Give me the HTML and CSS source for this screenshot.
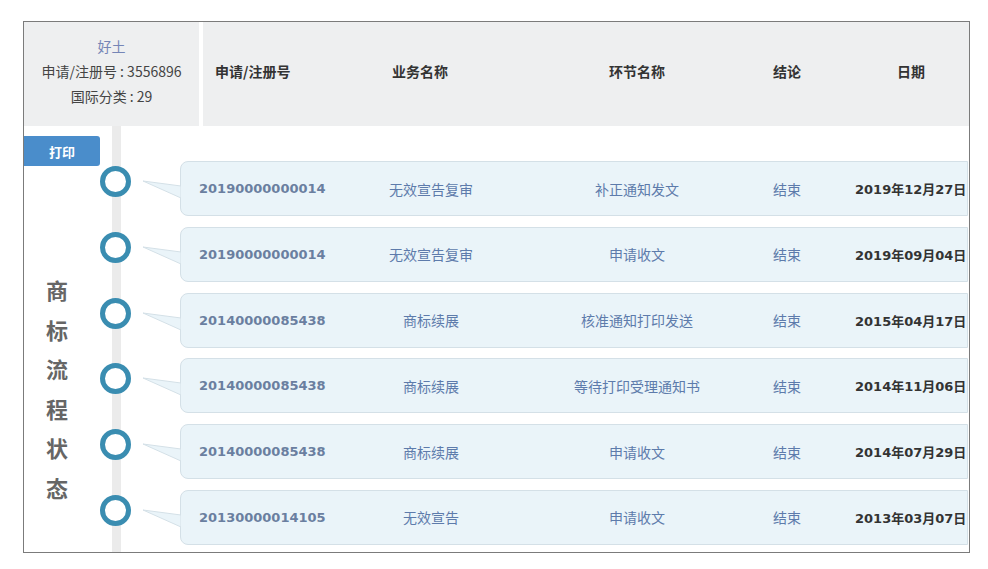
FILE: index.html
```html
<!DOCTYPE html>
<html lang="zh-CN">

<head>
    <meta charset="UTF-8" />
    <meta name="viewport" content="width=device-width, initial-scale=1.0" />
    <title>商标流程状态</title>
    <link rel="stylesheet" href="styles.css">
</head>

<body>

    <div class="frame">
        <header class="head">
            <div class="info">
                <div class="name">好土</div>
                <div>申请/注册号 : 3556896</div>
                <div>国际分类 : 29</div>
            </div>
            <div class="cols">
                <div class="col-num">申请/注册号</div>
                <div>业务名称</div>
                <div>环节名称</div>
                <div>结论</div>
                <div>日期</div>
            </div>
        </header>

        <main class="body">
            <aside class="side">
                <button class="print">打印</button>
                <div class="title">商标流程状态</div>
            </aside>

            <div class="timeline">
                <div class="row">
                    <span class="dot"></span>
                    <svg class="tail" width="38" height="55" viewBox="0 0 38 55">
                        <polygon points="38,25 0,20 38,37" fill="#eaf4f9" stroke="#d4e0e7" />
                    </svg>
                    <div class="card">
                        <div class="num">20190000000014</div>
                        <div class="biz">无效宣告复审</div>
                        <div class="step">补正通知发文</div>
                        <div class="res">结束</div>
                        <div class="date">2019年12月27日</div>
                    </div>
                </div>
                <div class="row">
                    <span class="dot"></span>
                    <svg class="tail" width="38" height="55" viewBox="0 0 38 55">
                        <polygon points="38,25 0,20 38,37" fill="#eaf4f9" stroke="#d4e0e7" />
                    </svg>
                    <div class="card">
                        <div class="num">20190000000014</div>
                        <div class="biz">无效宣告复审</div>
                        <div class="step">申请收文</div>
                        <div class="res">结束</div>
                        <div class="date">2019年09月04日</div>
                    </div>
                </div>
                <div class="row">
                    <span class="dot"></span>
                    <svg class="tail" width="38" height="55" viewBox="0 0 38 55">
                        <polygon points="38,25 0,20 38,37" fill="#eaf4f9" stroke="#d4e0e7" />
                    </svg>
                    <div class="card">
                        <div class="num">20140000085438</div>
                        <div class="biz">商标续展</div>
                        <div class="step">核准通知打印发送</div>
                        <div class="res">结束</div>
                        <div class="date">2015年04月17日</div>
                    </div>
                </div>
                <div class="row">
                    <span class="dot"></span>
                    <svg class="tail" width="38" height="55" viewBox="0 0 38 55">
                        <polygon points="38,25 0,20 38,37" fill="#eaf4f9" stroke="#d4e0e7" />
                    </svg>
                    <div class="card">
                        <div class="num">20140000085438</div>
                        <div class="biz">商标续展</div>
                        <div class="step">等待打印受理通知书</div>
                        <div class="res">结束</div>
                        <div class="date">2014年11月06日</div>
                    </div>
                </div>
                <div class="row">
                    <span class="dot"></span>
                    <svg class="tail" width="38" height="55" viewBox="0 0 38 55">
                        <polygon points="38,25 0,20 38,37" fill="#eaf4f9" stroke="#d4e0e7" />
                    </svg>
                    <div class="card">
                        <div class="num">20140000085438</div>
                        <div class="biz">商标续展</div>
                        <div class="step">申请收文</div>
                        <div class="res">结束</div>
                        <div class="date">2014年07月29日</div>
                    </div>
                </div>
                <div class="row">
                    <span class="dot"></span>
                    <svg class="tail" width="38" height="55" viewBox="0 0 38 55">
                        <polygon points="38,25 0,20 38,37" fill="#eaf4f9" stroke="#d4e0e7" />
                    </svg>
                    <div class="card">
                        <div class="num">20130000014105</div>
                        <div class="biz">无效宣告</div>
                        <div class="step">申请收文</div>
                        <div class="res">结束</div>
                        <div class="date">2013年03月07日</div>
                    </div>
                </div>
            </div>
        </main>
    </div>

</body>

</html>
```

FILE: styles.css
```css
:root {
    --head: #eeeff0;
    --frame: #7b7b7b;
    --card: #eaf4f9;
    --card-line: #d4e0e7;
    --ring: #3a8db1;
    --rail: #ebebeb;
    --link: #5d7bab;
    --num: #6a7fa0;
    --text: #333333;
}

body {
    margin: 0;
    background: #ffffff;
    font-family: "Noto Sans CJK SC", sans-serif;
    color: var(--text);
}

.frame {
    width: 945px;
    height: 530px;
    margin: 21px 0 0 23px;
    border: 1px solid var(--frame);
    overflow: hidden;
}

/* Header */
.head {
    display: flex;
    height: 104px;
    gap: 4px;
}

.info {
    width: 175px;
    flex: none;
    background: var(--head);
    display: flex;
    flex-direction: column;
    justify-content: center;
    align-items: center;
    padding-bottom: 6px;
    box-sizing: border-box;
    font-size: 14px;
    line-height: 25px;
    color: #444444;
}

.info .name {
    color: #7585b6;
}

.cols {
    flex: 1;
    background: var(--head);
    display: grid;
    grid-template-columns: 110px 214px 220px 80px 168px;
    align-items: center;
    padding-bottom: 6px;
    font-size: 14px;
    font-weight: bold;
    text-align: center;
    white-space: nowrap;
}

.cols .col-num {
    text-align: left;
    padding-left: 12px;
}

/* Body */
.body {
    display: flex;
    height: 426px;
}

.side {
    width: 76px;
    flex: none;
}

.print {
    display: block;
    width: 76px;
    height: 30px;
    margin-top: 10px;
    border: none;
    border-radius: 0 3px 3px 0;
    background: #4a8dcb;
    color: #ffffff;
    font-family: "Noto Sans CJK SC", sans-serif;
    font-size: 13px;
    font-weight: bold;
    padding: 0;
}

.title {
    width: 1em;
    margin: 104px 0 0 22px;
    font-size: 22px;
    line-height: 39.6px;
    font-weight: bold;
    color: #666666;
}

.timeline {
    flex: 1;
    padding-top: 35px;
    display: flex;
    flex-direction: column;
    gap: 10.8px;
    background: linear-gradient(var(--rail), var(--rail)) no-repeat 12px 0 / 9px 100%;
}

.row {
    display: flex;
    align-items: flex-start;
    height: 55px;
}

.dot {
    width: 31px;
    height: 31px;
    box-sizing: border-box;
    margin: 5px 0 0 0;
    border: 5.5px solid var(--ring);
    border-radius: 50%;
    background: #ffffff;
    flex: none;
}

.tail {
    display: block;
    flex: none;
    margin-left: 12px;
    margin-right: -1px;
    position: relative;
    z-index: 1;
}

.card {
    width: 788px;
    height: 55px;
    flex: none;
    box-sizing: border-box;
    background: var(--card);
    border: 1px solid var(--card-line);
    border-radius: 8px 0 0 8px;
    display: grid;
    grid-template-columns: 159px 182px 230px 70px 1fr;
    align-items: center;
    font-size: 14px;
    color: var(--link);
    text-align: center;
    white-space: nowrap;
}

.card .num {
    text-align: left;
    padding-left: 18px;
    font-family: "DejaVu Sans", "Noto Sans CJK SC", sans-serif;
    font-size: 13px;
    font-weight: bold;
    color: var(--num);
}

.card .date {
    text-align: left;
    padding-left: 33px;
    font-family: "DejaVu Sans", "Noto Sans CJK SC", sans-serif;
    font-size: 13px;
    font-weight: bold;
    color: var(--text);
}
```
